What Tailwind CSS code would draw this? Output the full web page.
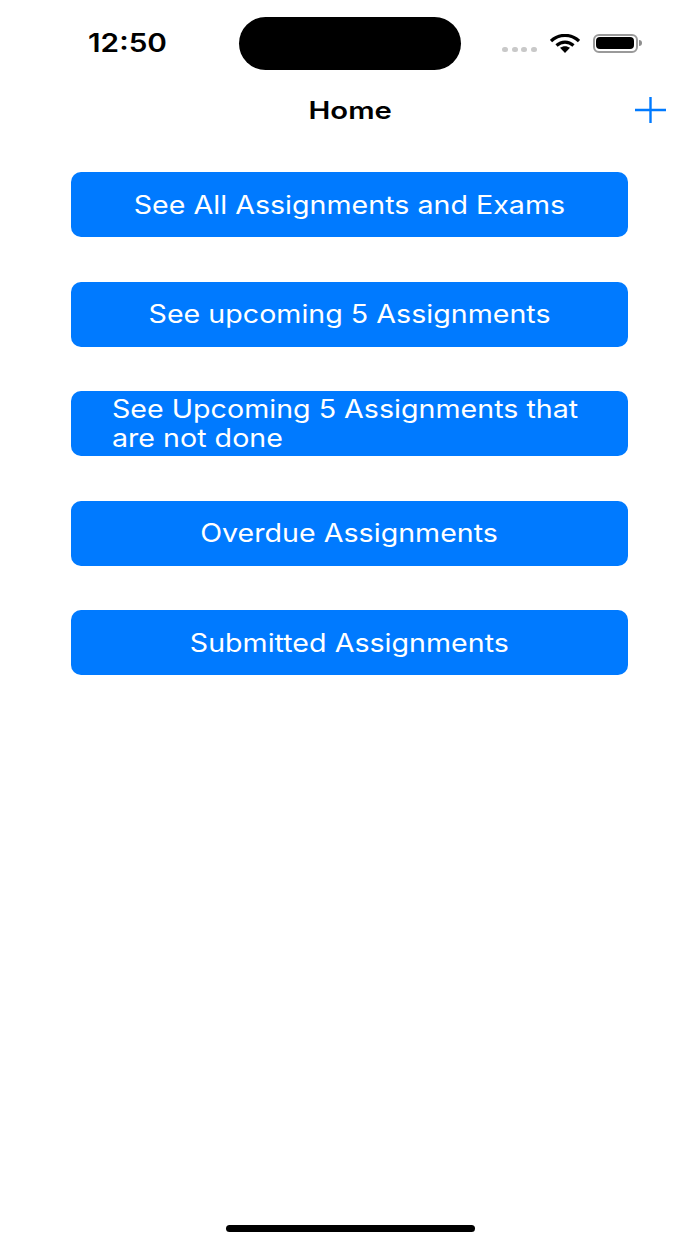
<!DOCTYPE html>
<html lang="en">
<head>
  <meta charset="UTF-8">
  <title>Home</title>
  <script src="https://cdn.jsdelivr.net/npm/@tailwindcss/browser@4"></script>
</head>
<body class="bg-white text-black font-['Inter',sans-serif]">
  <div class="w-[700px] h-[1244px] flex flex-col overflow-hidden">
    <!-- status bar -->
    <div class="grid grid-cols-[239px_222px_239px] pt-[17px]">
      <div class="h-[53px] flex items-center pl-[88px] pb-[1px]">
        <span class="inline-block origin-left scale-x-[1.145] text-[26px] leading-none font-semibold">12:50</span>
      </div>
      <div class="h-[53px] bg-black rounded-full"></div>
      <div class="h-[53px] flex items-center pl-[41px]">
        <div class="flex gap-[3.6px] mt-[11px] mr-[13px]">
          <span class="w-[6px] h-[5px] rounded-full bg-[#c9c9c9]"></span>
          <span class="w-[6px] h-[5px] rounded-full bg-[#c9c9c9]"></span>
          <span class="w-[6px] h-[5px] rounded-full bg-[#c9c9c9]"></span>
          <span class="w-[6px] h-[5px] rounded-full bg-[#c9c9c9]"></span>
        </div>
        <svg width="30" height="19" viewBox="0 0 30 19" class="mr-[13px] mb-[1px]">
          <path d="M1 7 C9 -0.5 21 -0.5 29 7" fill="none" stroke="#000" stroke-width="3.2"/>
          <path d="M6.5 11.5 C11.5 7 18.5 7 23.5 11.5" fill="none" stroke="#000" stroke-width="3.2"/>
          <path d="M10 13.8 C13 11.6 17 11.6 20 13.8 L15 19 Z" fill="#000"/>
        </svg>
        <div class="flex items-center mb-[1px]">
          <div class="w-[45px] h-[19px] rounded-[6px] border-2 border-[#9a9a9a] p-[1.5px]">
            <div class="w-full h-full rounded-[4px] bg-black"></div>
          </div>
          <span class="w-[3px] h-[6px] ml-[1px] rounded-r-full bg-[#8e8e8e]"></span>
        </div>
      </div>
    </div>

    <!-- nav bar -->
    <div class="grid grid-cols-[1fr_auto_1fr] items-center h-[46px] mt-[17px]">
      <div></div>
      <h1 class="scale-x-[1.22] text-[24px] leading-none font-semibold pt-[2px]">Home</h1>
      <div class="flex justify-end pr-[34px]">
        <svg width="31" height="26" viewBox="0 0 31 26">
          <path d="M0 13 H31 M15.5 0 V26" stroke="#007aff" stroke-width="2.4" fill="none"/>
        </svg>
      </div>
    </div>

    <!-- buttons -->
    <div class="flex flex-col gap-[44.5px] mt-[39px] pl-[71px] pr-[72px] text-white text-[25px]">
      <button class="h-[65px] rounded-[10px] bg-[#007aff] pt-[2px]"><span class="inline-block scale-x-[1.145]">See All Assignments and Exams</span></button>
      <button class="h-[65px] rounded-[10px] bg-[#007aff] pt-[2px]"><span class="inline-block scale-x-[1.145]">See upcoming 5 Assignments</span></button>
      <button class="h-[65px] rounded-[10px] bg-[#007aff] pl-[41px] text-left leading-[29px]"><span class="inline-block origin-left scale-x-[1.145]">See Upcoming 5 Assignments that<br>are not done</span></button>
      <button class="h-[65px] rounded-[10px] bg-[#007aff] pt-[2px]"><span class="inline-block scale-x-[1.145]">Overdue Assignments</span></button>
      <button class="h-[65px] rounded-[10px] bg-[#007aff] pt-[2px]"><span class="inline-block scale-x-[1.145]">Submitted Assignments</span></button>
    </div>

    <!-- home indicator -->
    <div class="mt-auto mb-[12px] mx-auto w-[249px] h-[7px] rounded-full bg-black"></div>
  </div>
</body>
</html>
